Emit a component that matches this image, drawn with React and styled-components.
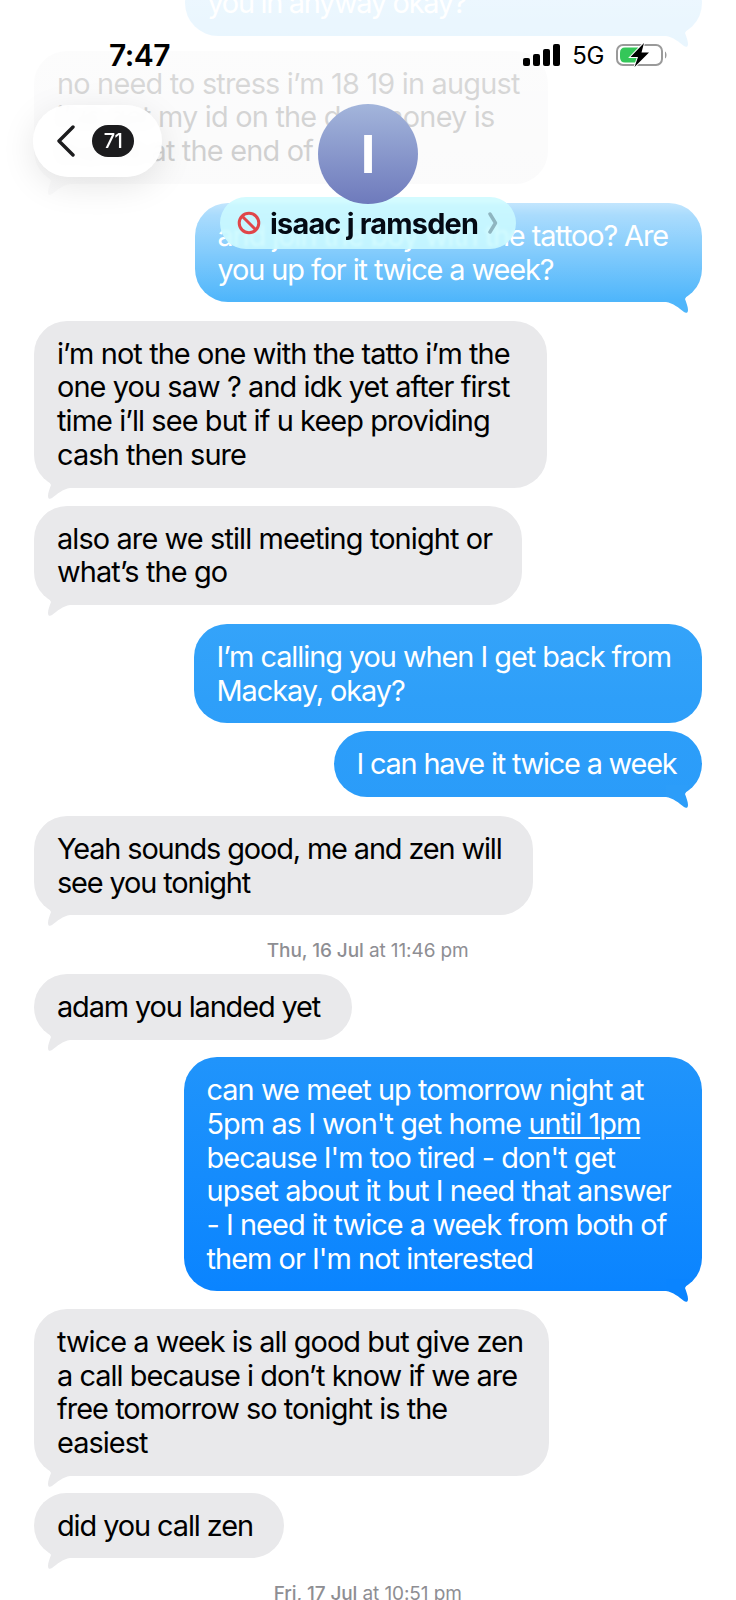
import React from "react";
import styled, { createGlobalStyle } from "styled-components";

const GlobalStyle = createGlobalStyle`
  html, body {
    margin: 0;
    background: #fff;
  }
`;

const Screen = styled.div`
  position: relative;
  width: 736px;
  height: 1600px;
  overflow: hidden;
  background: #fff;
  font-family: Inter, "Liberation Sans", sans-serif;
  -webkit-font-smoothing: antialiased;
`;

const Thread = styled.div`
  display: flex;
  flex-direction: column;
  margin-top: -30px;
  padding: 0 34.5px 0 34px;
`;

const Bubble = styled.div`
  position: relative;
  box-sizing: border-box;
  width: ${(props) => props.$width}px;
  margin-top: ${(props) => props.$gap ?? 18}px;
  padding: 16px 0 16px 23px;
  align-self: ${(props) => (props.$out ? "flex-end" : "flex-start")};
  border-radius: 33px;
  font-size: 28.9px;
  line-height: 33.7px;
  letter-spacing: ${(props) => props.$track ?? -0.95}px;
  white-space: nowrap;
  color: ${(props) => (props.$out ? "#fff" : "#000")};
  background: ${(props) =>
    props.$out
      ? "linear-gradient(180deg, #62bdfb 0, #4fb6fb 300px, #2e9ff9 700px, #2094fb 1060px, #0a84ff 1290px) fixed"
      : "#e9e9eb"};
`;

const TailShape = styled.svg`
  position: absolute;
  bottom: -12px;
  ${(props) => (props.$out ? "right: 0; transform: scaleX(-1);" : "left: 0;")}
`;

const Stamp = styled.div`
  margin-top: ${(props) => props.$gap}px;
  text-align: center;
  font-size: 19px;
  line-height: 22px;
  letter-spacing: -0.1px;
  color: #8e8e93;

  b {
    font-weight: 500;
  }
`;

const Underlined = styled.span`
  text-decoration: underline;
  text-decoration-thickness: 1.5px;
  text-underline-offset: 3px;
`;

const Header = styled.header`
  position: absolute;
  top: 0;
  left: 0;
  width: 100%;
  height: 310px;
  background: linear-gradient(
    180deg,
    rgba(255, 255, 255, 0.88) 0,
    rgba(255, 255, 255, 0.8) 190px,
    rgba(255, 255, 255, 0.5) 215px,
    rgba(255, 255, 255, 0) 300px
  );
`;

const StatusBar = styled.div`
  display: flex;
  align-items: center;
  justify-content: space-between;
  box-sizing: border-box;
  height: 30px;
  padding: 0 68px 0 109px;
  margin-top: 40px;
  position: absolute;
  top: 0;
  left: 0;
  width: 100%;
`;

const Time = styled.div`
  font-size: 30px;
  font-weight: 600;
  letter-spacing: -0.5px;
  color: #000;
`;

const StatusIcons = styled.div`
  display: flex;
  align-items: center;
`;

const Network = styled.span`
  margin: 0 12px 0 12px;
  font-size: 24px;
  letter-spacing: -0.4px;
  color: #000;
`;

const Nav = styled.div`
  position: absolute;
  top: 104px;
  left: 0;
  width: 100%;
  display: grid;
  grid-template-columns: 1fr auto 1fr;
  align-items: start;
`;

const BackPill = styled.div`
  justify-self: start;
  display: flex;
  align-items: center;
  gap: 16px;
  box-sizing: border-box;
  width: 129px;
  height: 72px;
  margin: 1px 0 0 33px;
  padding-left: 23px;
  border-radius: 36px;
  background: rgba(255, 255, 255, 0.88);
  backdrop-filter: blur(6px);
  box-shadow: 0 8px 34px rgba(0, 0, 0, 0.1);
`;

const Badge = styled.span`
  display: flex;
  align-items: center;
  justify-content: center;
  width: 42px;
  height: 32px;
  border-radius: 16px;
  background: #1c1c1e;
  color: #fff;
  font-size: 20px;
  font-weight: 500;
  letter-spacing: -0.5px;
`;

const Contact = styled.div`
  display: flex;
  flex-direction: column;
  align-items: center;
`;

const Avatar = styled.div`
  position: relative;
  z-index: 1;
  display: flex;
  align-items: center;
  justify-content: center;
  width: 100px;
  height: 100px;
  border-radius: 50%;
  background: linear-gradient(180deg, #a3b5db 0%, #6e7abc 100%);
  color: #fff;
  font-size: 52px;
  font-weight: 700;
`;

const NamePill = styled.div`
  display: flex;
  align-items: center;
  box-sizing: border-box;
  width: 296px;
  height: 52px;
  margin-top: -7px;
  padding-left: 17px;
  border-radius: 26px;
  background: rgba(204, 250, 255, 0.86);
  backdrop-filter: blur(1.5px);
`;

const Name = styled.span`
  margin: 0 10px 0 9px;
  font-size: 28.8px;
  font-weight: 700;
  letter-spacing: -0.75px;
  color: #040a14;
`;

const Tail = ({ out }) => (
  <TailShape $out={out} width="40" height="24" viewBox="0 -12 40 24">
    <path
      d="M12 -12 L17 -3 C15.5 1 14 5 14 8 C14 11 16 11.5 18 10 C23 6 29 1 36 0 L36 -12 Z"
      fill={out || "#e9e9eb"}
    />
  </TailShape>
);

const SignalIcon = () => (
  <svg width="37" height="22" viewBox="0 0 37 22">
    <rect x="0" y="14" width="7" height="8" rx="2" fill="#000" />
    <rect x="10" y="10" width="7" height="12" rx="2" fill="#000" />
    <rect x="20" y="5" width="7" height="17" rx="2" fill="#000" />
    <rect x="30" y="0" width="7" height="22" rx="2" fill="#000" />
  </svg>
);

const BatteryIcon = () => (
  <svg width="52" height="24" viewBox="0 0 52 24">
    <rect x="1" y="2" width="45" height="20" rx="6" fill="none" stroke="#9a9a9a" strokeWidth="2" />
    <path d="M49 8.5 C51 9.5 51 14.5 49 15.5 Z" fill="#9a9a9a" />
    <path d="M9 4.5 H22 V19.5 H9 Q4 19.5 4 14 V10 Q4 4.5 9 4.5 Z" fill="#34c759" />
    <path
      d="M28 0 L14.5 14 H22 L18.5 24 L33 9.5 H25.5 Z"
      fill="#000"
      stroke="#fff"
      strokeWidth="2"
      paintOrder="stroke"
    />
  </svg>
);

const BanIcon = () => (
  <svg width="24" height="24" viewBox="0 0 24 24">
    <circle cx="12" cy="12" r="9.8" fill="none" stroke="#e0464a" strokeWidth="3" />
    <path d="M5.2 5.2 L18.8 18.8" stroke="#e0464a" strokeWidth="3" />
  </svg>
);

const App = () => (
  <Screen>
    <GlobalStyle />
    <Thread>
      <Bubble $out $gap={0} $width={517} $track={-1.3}>
        you in anyway okay?
        <Tail out="#62bdfb" />
      </Bubble>
      <Bubble $gap={15} $width={514} $track={-0.8}>
        no need to stress i’m 18 19 in august
        <br />
        i’ve got my id on the day money is
        <br />
        thanks at the end of
        <Tail />
      </Bubble>
      <Bubble $out $gap={19} $width={507} $track={-1.1}>
        and join the boy with the tattoo? Are
        <br />
        you up for it twice a week?
        <Tail out="#4fb6fb" />
      </Bubble>
      <Bubble $gap={18.5} $width={513} $track={-0.9}>
        i’m not the one with the tatto i’m the
        <br />
        one you saw ? and idk yet after first
        <br />
        time i’ll see but if u keep providing
        <br />
        cash then sure
        <Tail />
      </Bubble>
      <Bubble $width={488} $track={-0.88}>
        also are we still meeting tonight or
        <br />
        what’s the go
        <Tail />
      </Bubble>
      <Bubble $out $gap={19} $width={508} $track={-1.05}>
        I’m calling you when I get back from
        <br />
        Mackay, okay?
      </Bubble>
      <Bubble $out $gap={8} $width={368} $track={-1.2}>
        I can have it twice a week
        <Tail out="#2c9df9" />
      </Bubble>
      <Bubble $gap={19} $width={499} $track={-1.13}>
        Yeah sounds good, me and zen will
        <br />
        see you tonight
        <Tail />
      </Bubble>
      <Stamp $gap={25}>
        <b>Thu, 16 Jul</b> at 11:46 pm
      </Stamp>
      <Bubble $gap={12} $width={318} $track={-1.12}>
        adam you landed yet
        <Tail />
      </Bubble>
      <Bubble $out $gap={17} $width={518}>
        can we meet up tomorrow night at
        <br />
        5pm as I won't get home <Underlined>until 1pm</Underlined>
        <br />
        because I'm too tired - don't get
        <br />
        upset about it but I need that answer
        <br />- I need it twice a week from both of
        <br />
        them or I'm not interested
        <Tail out="#0a84ff" />
      </Bubble>
      <Bubble $gap={17.5} $width={515}>
        twice a week is all good but give zen
        <br />a call because i don’t know if we are
        <br />
        free tomorrow so tonight is the
        <br />
        easiest
        <Tail />
      </Bubble>
      <Bubble $gap={17} $width={250} $track={-1.08}>
        did you call zen
        <Tail />
      </Bubble>
      <Stamp $gap={25}>
        <b>Fri, 17 Jul</b> at 10:51 pm
      </Stamp>
    </Thread>
    <Header>
      <StatusBar>
        <Time>7:47</Time>
        <StatusIcons>
          <SignalIcon />
          <Network>5G</Network>
          <BatteryIcon />
        </StatusIcons>
      </StatusBar>
      <Nav>
        <BackPill>
          <svg width="20" height="32" viewBox="0 0 20 32">
            <path
              d="M17 2 L3 16 L17 30"
              fill="none"
              stroke="#1c1c1e"
              strokeWidth="3.4"
              strokeLinecap="round"
              strokeLinejoin="round"
            />
          </svg>
          <Badge>71</Badge>
        </BackPill>
        <Contact>
          <Avatar>I</Avatar>
          <NamePill>
            <BanIcon />
            <Name>isaac j ramsden</Name>
            <svg width="10" height="22" viewBox="0 0 10 22">
              <path
                d="M2 2 L7.5 11 L2 20"
                fill="none"
                stroke="#8fb5c0"
                strokeWidth="3.4"
                strokeLinecap="round"
                strokeLinejoin="round"
              />
            </svg>
          </NamePill>
        </Contact>
        <div />
      </Nav>
    </Header>
  </Screen>
);

export default App;
